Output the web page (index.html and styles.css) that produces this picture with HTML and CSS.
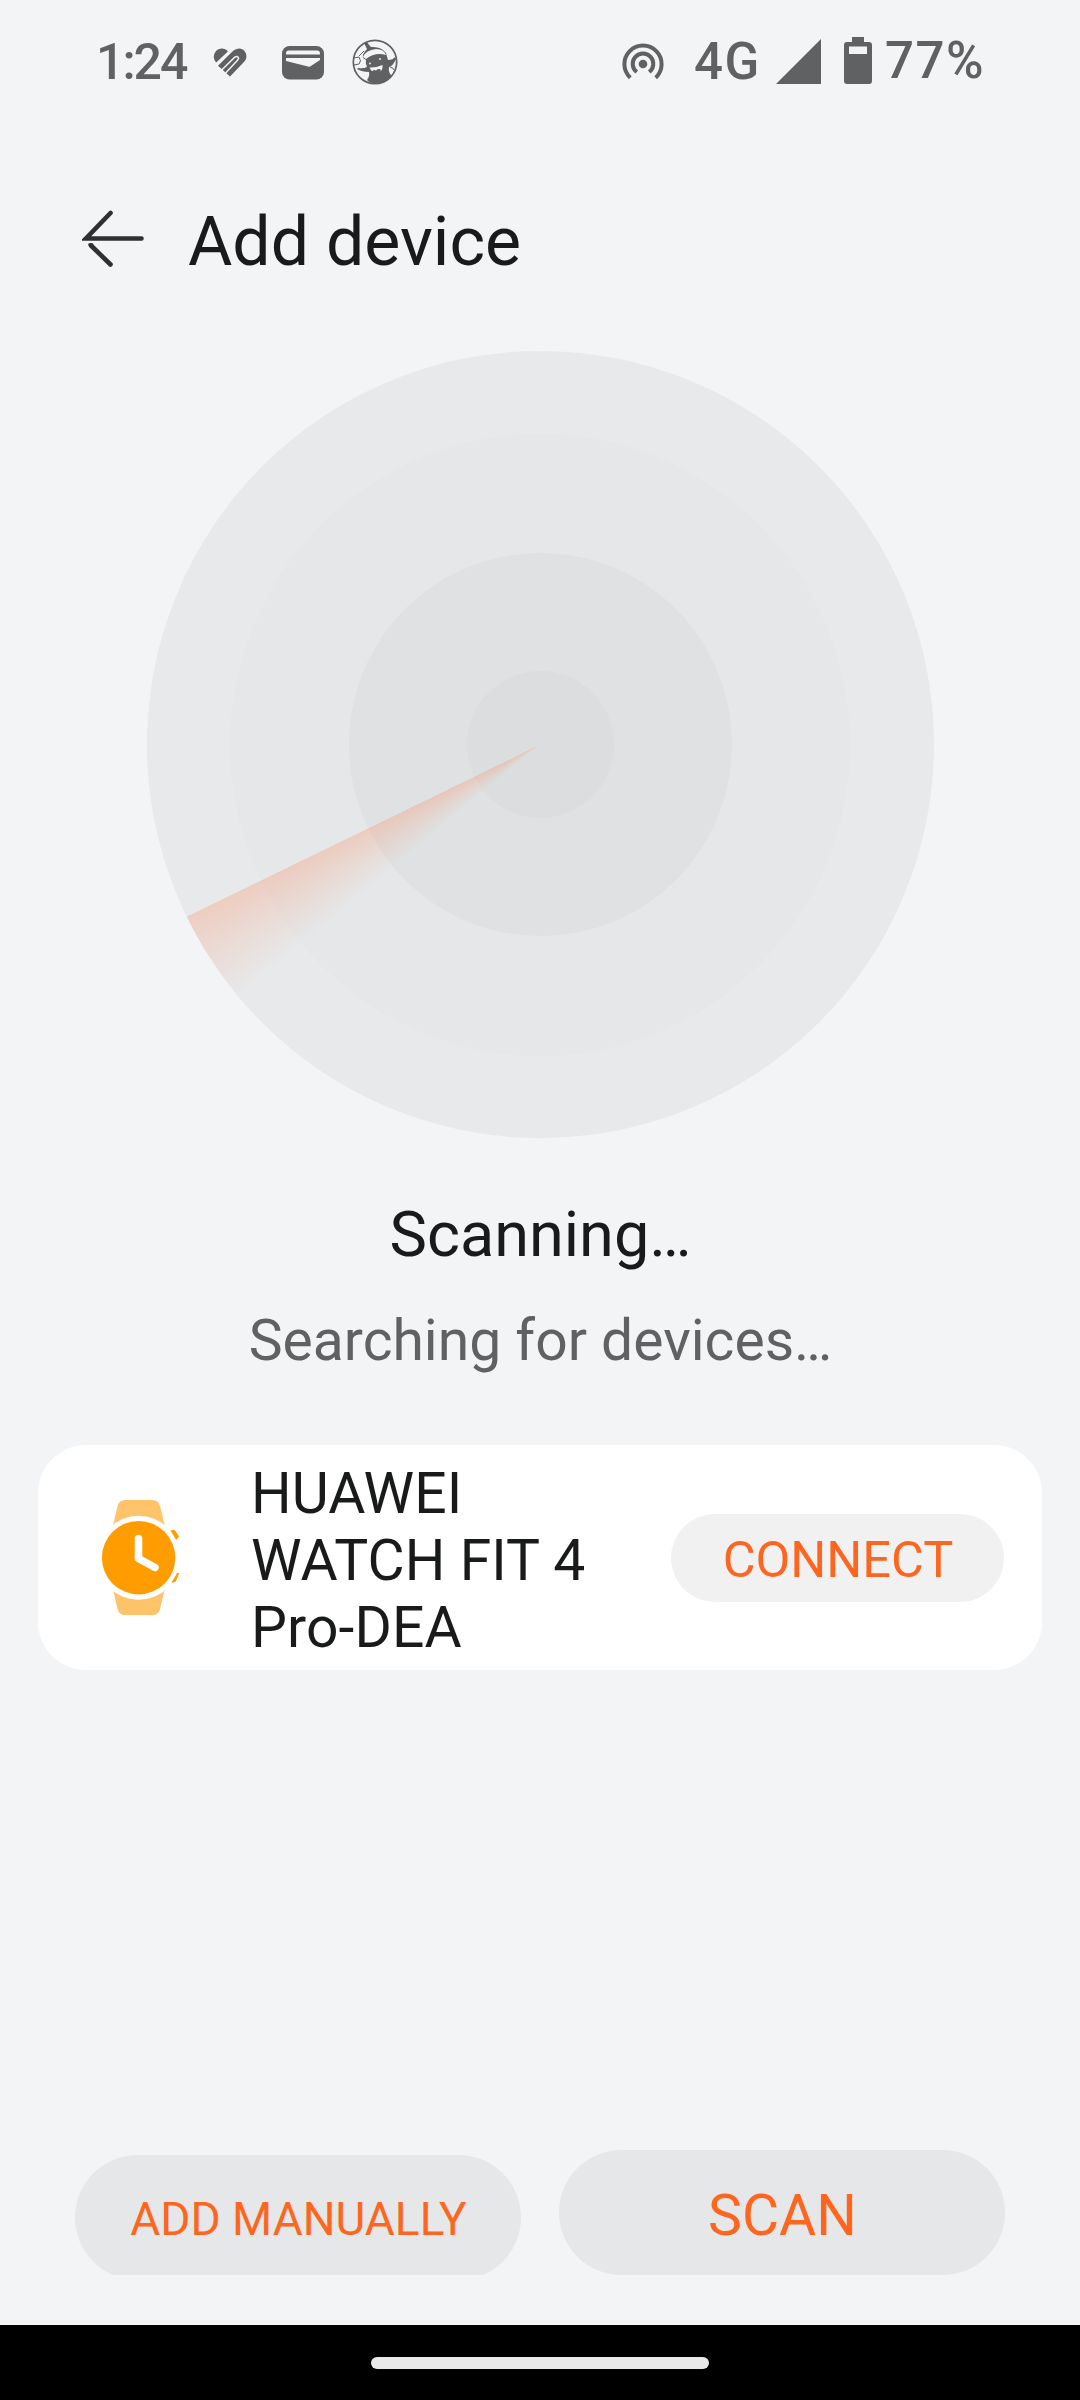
FILE: index.html
```html
<!DOCTYPE html>
<html lang="en">
<head>
<meta charset="utf-8">
<title>Add device</title>
<link rel="stylesheet" href="styles.css">
</head>
<body>
<div class="screen">
  <div class="status">
    <span class="clock">1:24</span>
    <svg class="ic-heart" width="34" height="30" viewBox="0 0 34 30">
      <path d="M3.200 14.600A8.300 8.300 0 0 1 2.700 3.400C6-.3 11-.3 14.300 2.800L14.900 3.400Z"/>
      <path d="M5 17.800 19.700 3.200C24.300-.4 29-.1 31.700 3.200 34.200 6.400 34 10.800 31.200 13.700L17 28.500Z"/>
      <path class="slit" d="M8.500 22.200 21.500 9.400Q24.500 7.200 25.700 10.200L24.500 12.300 12.400 25.300"/>
    </svg>
    <svg class="ic-wallet" width="42" height="34" viewBox="0 0 42 34">
      <rect width="42" height="33.500" rx="7.500"/>
      <path class="cut" d="M4 8.500V7.500Q4 4.500 7 4.500H35Q38 4.500 38 7.500V8.500ZM4 12H38V14L28.500 20.300Q27.500 21 26 20.500L4 15Z"/>
    </svg>
    <svg class="ic-avatar" width="46" height="46" viewBox="0 0 46 46">
      <circle cx="23" cy="23" r="21.700" fill="none" stroke="#606162" stroke-width="1.700"/>
      <path d="M12 4 15 3Q17 6 19 8Q29 7 34 14L36 21Q41 21 43 18L44 20Q41 27 37 28Q36 34 40 37Q33 45 23 44.500Q17 44 15 41Q18 37 17 33Q10 33 5 30L6 29Q11 30 15 28Q13 24 14 21L11 19Q10 15 15 10Z"/>
      <path class="cut" d="M11 18Q14 11 24 10Q32 10 34 16Q23 13 14 20Z"/>
      <path class="cut" d="M17.500 28.500Q23 29 30.500 26Q31 31 28 32.500Q20 35 17.500 28.500Z"/>
      <path d="M20 33Q21 30 24 31.500Q27 29 29 31L27 34H21Z"/>
      <path d="M2 19 7 18Q10 22 7 25L2 26M7 17 12 12M38 28Q42 29 42 31" fill="none" stroke="#606162" stroke-width="1"/>
      <circle class="cut" cx="18" cy="24.500" r=".9"/><circle class="cut" cx="28" cy="20" r=".9"/>
    </svg>
    <svg class="ic-hotspot" width="42" height="38" viewBox="0 0 42 38">
      <circle cx="21" cy="21" r="4.300"/>
      <path d="M14.800 29A10.300 10.300 0 1 1 27.200 29M8.300 34.700A18.600 18.600 0 1 1 33.700 34.700" fill="none" stroke="#606162" stroke-width="4"/>
    </svg>
    <span class="network">4G</span>
    <svg class="ic-signal" width="45" height="45" viewBox="0 0 45 45"><path d="M0 45 45 0V45Z"/></svg>
    <svg class="ic-battery" width="28" height="47" viewBox="0 0 28 47">
      <path d="M8 0H20V5H25Q28 5 28 8V44Q28 47 25 47H3Q0 47 0 44V8Q0 5 3 5H8Z"/>
      <rect class="cut" x="5" y="9.500" width="18" height="7.500"/>
    </svg>
    <span class="percent">77%</span>
  </div>

  <header class="header">
    <svg width="62" height="58" viewBox="0 0 62 58" fill="none" stroke="#2f3032" stroke-width="4.600" stroke-linecap="round">
      <path d="M28.500 4 4 29.500H59.500"/>
      <path d="M9 36.500 28.500 55.500"/><path d="M7.500 35.500H10" stroke-width="2.500"/>
    </svg>
    <h1>Add device</h1>
  </header>

  <div class="radar">
    <div class="ring ring-2"></div>
    <div class="ring ring-3"></div>
    <div class="ring ring-4"></div>
    <div class="ring sweep"></div>
  </div>

  <p class="title">Scanning…</p>
  <p class="subtitle">Searching for devices…</p>

  <div class="card">
    <svg class="watch" width="80" height="116" viewBox="0 0 80 116">
      <path fill="#ffc369" d="M12.700 27 17.500 6Q19 0 25 0H52.500Q58.500 0 60 6L65 27V88L60 109Q58.500 115 52.500 115H25Q19 115 17.500 109L12.700 88Z"/>
      <circle cx="38.600" cy="57.700" r="42" fill="#fff"/>
      <circle cx="38.600" cy="57.700" r="36.700" fill="#ff9d00"/>
      <path d="M38.500 38.500V58.500L55 67.500" fill="none" stroke="#fff" stroke-width="7.600" stroke-linecap="round" stroke-linejoin="round"/>
      <path d="M71.500 31Q74 29.500 75.500 32L78.300 36.500 76.300 39ZM78.500 73.500 75 81.500 72.600 82 77.500 73.500Z" fill="#ff9d00" stroke="#ff9d00" stroke-width="1.200"/>
    </svg>
    <div class="name">HUAWEI<br>WATCH FIT 4<br>Pro-DEA</div>
    <div class="connect">CONNECT</div>
  </div>

  <div class="actions">
    <div class="clip"><div class="btn manual">ADD MANUALLY</div></div>
    <div class="btn scan">SCAN</div>
  </div>
  <div class="nav"><div class="handle"></div></div>
</div>
</body>
</html>
```
FILE: styles.css
```css
* { box-sizing: border-box; margin: 0; padding: 0; }
body { background: #f2f4f6; font-family: Roboto, "Liberation Sans", sans-serif; color: #191a1a; }
svg { display: block; flex: none; }
.screen { width: 1080px; height: 2400px; display: flex; flex-direction: column; overflow: hidden; }

.status { height: 124px; flex: none; display: flex; align-items: flex-start; padding-left: 96px; fill: #606162; color: #606162; font-size: 50px; font-weight: 500; white-space: nowrap; }
.status span { flex: none; line-height: 60px; margin-top: 32px; }
.status .cut { fill: #f2f4f6; }
.slit { fill: none; stroke: #f2f4f6; stroke-width: 1.4; }
.status .clock { width: 117px; letter-spacing: -2px; }
.ic-heart { margin-top: 48px; }
.ic-wallet { margin: 46px 0 0 34.500px; }
.ic-avatar { margin: 39px 0 0 28.500px; }
.ic-hotspot { margin: 43px 0 0 224px; }
.status .network { width: 82px; margin-left: 30px; font-size: 51px; letter-spacing: 1.500px; }
.ic-signal { margin-top: 39px; }
.ic-battery { margin: 37px 0 0 23px; }
.status .percent { margin-left: 13px; margin-top: 31px; font-size: 51px; letter-spacing: 1.500px; }

.header { height: 227px; flex: none; display: flex; align-items: flex-start; padding-left: 82px; }
.header svg { margin-top: 85px; }
.header h1 { margin: 78px 0 0 44px; font-size: 68px; line-height: 80px; font-weight: 400; white-space: nowrap; }

.radar { width: 787px; height: 787px; flex: none; margin: 0 auto; border-radius: 50%; background: #e7e9ea; display: grid; place-items: center; }
.ring { grid-area: 1 / 1; border-radius: 50%; }
.ring-2 { width: 620px; height: 622px; background: #e5e7e8; }
.ring-3 { width: 383px; height: 383px; background: #dfe1e2; }
.ring-4 { width: 147px; height: 147px; background: #dbddde; }
.sweep { width: 787px; height: 787px; background: conic-gradient(from 0deg at 49.400% 50.300%, rgba(255,130,90,0) 230deg, rgba(255,130,80,.13) 237deg, rgba(255,130,80,.27) 244deg, rgba(255,130,80,0) 244.100deg); }

.title { margin-top: 61px; text-align: center; font-size: 63px; line-height: 72px; text-indent: 1px; }
.subtitle { margin-top: 36px; text-align: center; font-size: 57px; line-height: 68px; color: #606162; text-indent: 1px; }

.card { width: 1004px; height: 225px; flex: none; margin: 70px 38px 0; border-radius: 48px; background: #fff; display: flex; align-items: center; padding: 0 37px 0 62px; }
.name { width: 420px; margin-left: 71px; padding-top: 5px; font-size: 57px; line-height: 67px; letter-spacing: .1px; white-space: nowrap; }
.connect { width: 333px; height: 88px; border-radius: 44px; background: #f1f1f1; color: #fe6620; font-size: 50.500px; line-height: 91px; text-align: center; text-indent: 1px; }

.actions { margin-top: auto; height: 175px; flex: none; display: flex; gap: 38px; padding: 0 75px; color: #fe6620; }
.clip { height: 120px; margin-top: 5px; overflow: hidden; }
.btn { width: 446px; height: 125px; border-radius: 63px; background: #e5e7e8; text-align: center; white-space: nowrap; }
.manual { font-size: 46px; line-height: 129px; text-indent: 1px; }
.scan { font-size: 57px; line-height: 132px; text-indent: 1px; }
.nav { height: 75px; flex: none; background: #000; display: flex; justify-content: center; padding-top: 32px; }
.handle { width: 338px; height: 12px; border-radius: 6px; background: #e9e9e9; }
```
